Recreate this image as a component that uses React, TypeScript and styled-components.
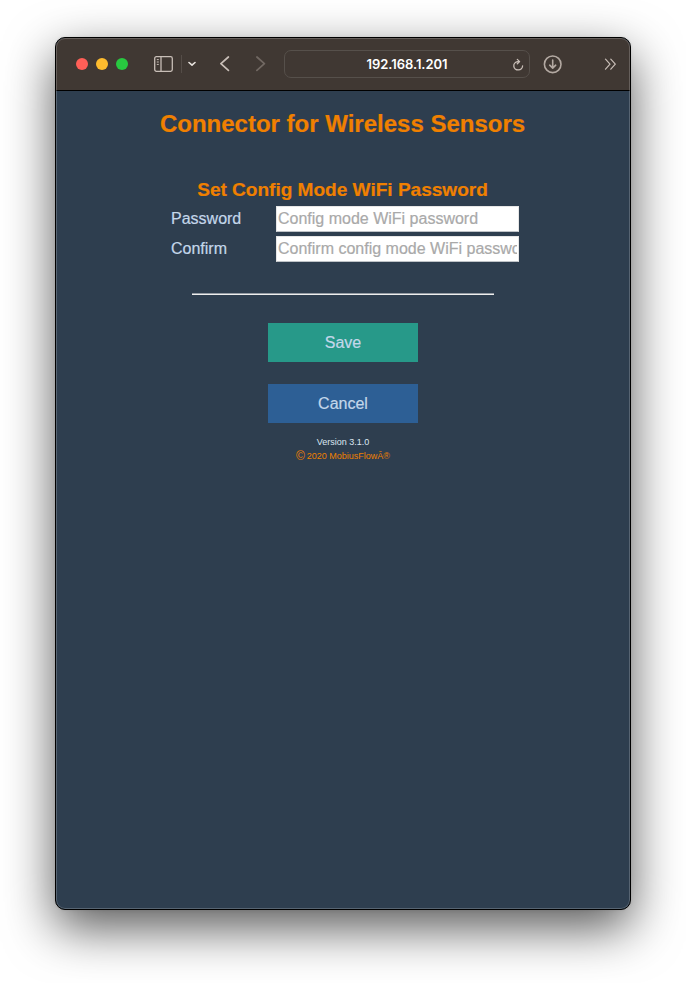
import React from "react";
import styled, { createGlobalStyle } from "styled-components";

const GlobalStyle = createGlobalStyle`
  *, *::before, *::after { box-sizing: border-box; }
  body {
    margin: 0;
    background: #fff;
    font-family: "Liberation Sans", Arial, Helvetica, sans-serif;
  }
`;

const Desktop = styled.div`
  display: flex;
  justify-content: center;
  height: 983px;
  padding-top: 37px;
  overflow: hidden;
`;

const BrowserWindow = styled.div`
  position: relative;
  display: flex;
  flex-direction: column;
  width: 576px;
  height: 873px;
  border: 1px solid #000;
  border-radius: 10px;
  overflow: hidden;
  background: #2e3e4f;
  box-shadow: 0 18px 50px rgba(0, 0, 0, 0.66), 0 0 3px rgba(0, 0, 0, 0.1);

  &::after {
    content: "";
    position: absolute;
    inset: 0;
    border: 1px solid rgba(255, 255, 255, 0.2);
    border-radius: 9px;
    pointer-events: none;
  }
`;

const Toolbar = styled.header`
  display: flex;
  align-items: center;
  flex: none;
  height: 53px;
  padding: 0 13px 0 20px;
  background: #403833;
  border-bottom: 1px solid #000;
  color: #c8beb7;
`;

const TrafficLights = styled.div`
  display: flex;
  gap: 8px;
`;

const Light = styled.span<{ $color: string }>`
  width: 12px;
  height: 12px;
  border-radius: 50%;
  background: ${(p) => p.$color};
`;

const Icon = styled.svg<{ $gap?: number; $faded?: boolean }>`
  display: block;
  flex: none;
  margin-left: ${(p) => p.$gap ?? 0}px;
  fill: none;
  stroke: currentColor;
  stroke-linecap: round;
  stroke-linejoin: round;
  opacity: ${(p) => (p.$faded ? 0.36 : 1)};
`;

const Divider = styled.span`
  width: 1px;
  height: 18px;
  margin-left: 8px;
  background: #554d48;
`;

const AddressBar = styled.div`
  display: grid;
  grid-template-columns: 1fr auto 1fr;
  align-items: center;
  width: 246px;
  height: 28px;
  margin-left: 18px;
  padding: 0 5px;
  border: 1px solid #56504b;
  border-radius: 7px;
`;

const Address = styled.span`
  grid-column: 2;
  color: #fff;
  font: 600 13px/16px Inter, sans-serif;
  letter-spacing: -0.05px;
`;

const ReloadIcon = styled(Icon)`
  justify-self: end;
`;

const MoreIcon = styled(Icon)`
  margin-left: auto;
`;

const Page = styled.main`
  display: flex;
  flex-direction: column;
  align-items: center;
  flex: 1;
  padding-top: 19px;
  color: #c4d7ea;
  font-size: 16px;
  -webkit-text-stroke: 0.2px currentColor;
`;

const Title = styled.h1`
  margin: 0 1px 0 0;
  color: #f08000;
  font-size: 24px;
  line-height: 28px;
`;

const Subtitle = styled.h2`
  margin: 41px 1px 0 0;
  color: #f08000;
  font-size: 19.05px;
  line-height: 22px;
`;

const Form = styled.form`
  display: flex;
  flex-direction: column;
  align-items: center;
  margin-top: -1px;
`;

const Field = styled.label`
  display: grid;
  grid-template-columns: 105px 243px;
  align-items: center;
  height: 26px;
  margin: 6px 0 -2px 4px;
`;

const Input = styled.input`
  width: 243px;
  height: 26px;
  padding: 1px 1px 2px;
  border: 1px solid #e6e6e6;
  border-bottom-color: #bfc3c7;
  border-radius: 0;
  background: #fff;
  font: 16px "Liberation Sans", Arial, sans-serif;

  &::placeholder { color: #a9a9a9; opacity: 1; }
`;

const Rule = styled.hr`
  width: 302px;
  height: 2px;
  margin: 33px 0 28px;
  border: 0;
  border-top: 1px solid #949ba3;
  background: #eee;
`;

const Button = styled.button<{ $color: string }>`
  width: 150px;
  height: 39px;
  margin-bottom: 22px;
  padding: 0;
  border: 0;
  background: ${(p) => p.$color};
  color: #c4d7ea;
  font: 16px "Liberation Sans", Arial, sans-serif;
  -webkit-text-stroke: 0.2px currentColor;
`;

const Footer = styled.footer`
  display: flex;
  flex-direction: column;
  align-items: center;
  margin-top: -10px;
  color: #dce7f2;
  font-size: 9px;
  line-height: 14px;
  -webkit-text-stroke: 0;
`;

const Copyright = styled.span`
  display: flex;
  align-items: center;
  height: 14px;
  gap: 2px;
  color: #f08000;
`;

const CopyrightMark = styled.span`
  font-size: 12px;
  line-height: 14px;
`;

const fields = [
  { label: "Password", hint: "Config mode WiFi password" },
  { label: "Confirm", hint: "Confirm config mode WiFi password" },
];

function BrowserToolbar() {
  return (
    <Toolbar>
      <TrafficLights>
        <Light $color="#ff5f57" />
        <Light $color="#febc2e" />
        <Light $color="#28c840" />
      </TrafficLights>
      <Icon $gap={26} width="19" height="16" viewBox="0 0 19 16" strokeWidth="1.3">
        <rect x=".7" y=".7" width="17.6" height="14.6" rx="1.7" />
        <path d="M7 1v14" />
        <path d="M3.2 3.6h1.2M3.2 6h1.2M3.2 8.4h1.2" strokeWidth="1" />
      </Icon>
      <Divider />
      <Icon $gap={6} width="8" height="6" viewBox="0 0 8 6" strokeWidth="1.6" color="#e7e2de">
        <path d="M1 1.5l3 2.7 3-2.7" />
      </Icon>
      <Icon $gap={24} width="10" height="16" viewBox="0 0 10 16" strokeWidth="1.7">
        <path d="M8.400 1L.9 7.700l7.500 6.700" />
      </Icon>
      <Icon $gap={26} $faded width="10" height="16" viewBox="0 0 10 16" strokeWidth="1.7">
        <path d="M.9 1l7.500 6.700L.9 14.400" />
      </Icon>
      <AddressBar>
        <Address>192.168.1.201</Address>
        <ReloadIcon width="12" height="14" viewBox="0 0 12 14" strokeWidth="1.3">
          <path d="M7.300 4.600H5.700a4.400 4.200 0 1 0 4.900 4.200M5.300 2.400l2.300 2.200-2.300 2.200" />
        </ReloadIcon>
      </AddressBar>
      <Icon $gap={13} width="19" height="19" viewBox="0 0 19 19" strokeWidth="1.6" color="#b3a9a2">
        <circle cx="9.700" cy="9.300" r="8.300" />
        <path d="M9.700 5v8M6.700 10.200l3 2.900 3-2.900" />
      </Icon>
      <MoreIcon width="13" height="12" viewBox="0 0 13 12" strokeWidth="1.2">
        <path d="M1.500 1.200l4.500 5-4.500 5M6.800 1.200l4.500 5-4.500 5" />
      </MoreIcon>
    </Toolbar>
  );
}

export default function App() {
  return (
    <>
      <GlobalStyle />
      <Desktop>
        <BrowserWindow>
          <BrowserToolbar />
          <Page>
            <Title>Connector for Wireless Sensors</Title>
            <Subtitle>Set Config Mode WiFi Password</Subtitle>
            <Form>
              {fields.map((field) => (
                <Field key={field.label}>
                  <span>{field.label}</span>
                  <Input type="password" placeholder={field.hint} />
                </Field>
              ))}
              <Rule />
              <Button type="button" $color="#279989">Save</Button>
              <Button type="button" $color="#2d5f95">Cancel</Button>
            </Form>
            <Footer>
              <span>Version 3.1.0</span>
              <Copyright>
                <CopyrightMark>©</CopyrightMark>
                <span>2020 MobiusFlowÂ®</span>
              </Copyright>
            </Footer>
          </Page>
        </BrowserWindow>
      </Desktop>
    </>
  );
}
